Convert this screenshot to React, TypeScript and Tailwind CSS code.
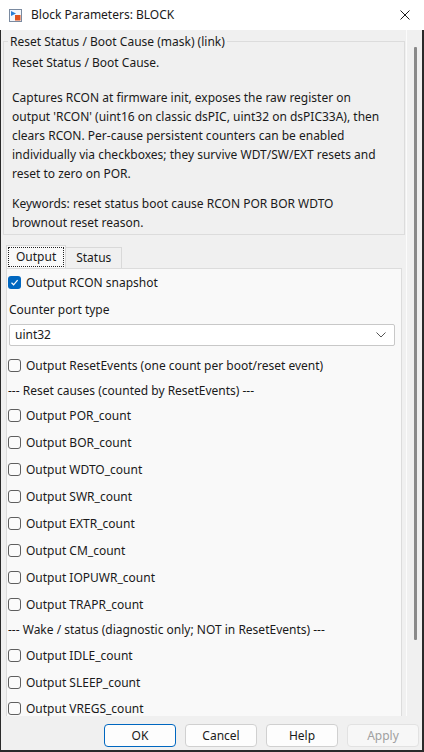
import React from "react";

const font = { fontFamily: '"Noto Sans", "Open Sans", Arial, sans-serif' };

function Box({ checked = false }: { checked?: boolean }) {
  if (checked) {
    return (
      <span className="w-[13px] h-[13px] rounded-[3px] bg-[#0067c0] flex items-center justify-center shrink-0">
        <svg width="9" height="9" viewBox="0 0 9 9">
          <path d="M1.5 4.8 L3.6 6.8 L7.6 2.2" fill="none" stroke="white" strokeWidth="1.2" />
        </svg>
      </span>
    );
  }
  return <span className="w-[13px] h-[13px] rounded-[3px] border border-[#5f5f5f] bg-[#fbfbfb] shrink-0" />;
}

function Check({ label, checked = false }: { label: string; checked?: boolean }) {
  return (
    <div className="h-[27px] flex items-center gap-[5px]">
      <Box checked={checked} />
      <span>{label}</span>
    </div>
  );
}

function Btn({ children, primary = false, disabled = false }: { children: React.ReactNode; primary?: boolean; disabled?: boolean }) {
  return (
    <div
      className={
        "w-[72px] h-[23px] rounded-[4px] flex items-center justify-center " +
        (primary
          ? "border-[1.5px] border-[#0067c0] text-[#1a1a1a] bg-[#fdfdfd]"
          : disabled
          ? "border border-[#e2e2e2] text-[#a0a0a0] bg-[#f7f7f7]"
          : "border border-[#d0d0d0] text-[#1a1a1a] bg-[#fdfdfd]")
      }
    >
      {children}
    </div>
  );
}

export default function App() {
  return (
    <div className="w-[424px] h-[752px] bg-white flex flex-col text-[12px] text-[#1a1a1a] overflow-hidden" style={font}>
      {/* title bar */}
      <div className="h-[30px] flex items-center shrink-0 bg-white">
        <div className="ml-[9px] w-[13px] h-[13px]">
          <svg width="13" height="13" viewBox="0 0 13 13">
            <rect x="0.5" y="0.5" width="12" height="12" fill="#f4f7fb" stroke="#7a8aa0" />
            <path d="M2 2 L7 4.5 L2 7 Z" fill="#2a7fd4" />
            <rect x="6" y="6" width="5.5" height="5.5" fill="#e0521c" />
          </svg>
        </div>
        <span className="ml-[9px] text-[12px]">Block Parameters: BLOCK</span>
        <div className="ml-auto mr-[14px]">
          <svg width="10" height="10" viewBox="0 0 10 10">
            <path d="M0.5 0.5 L9.5 9.5 M9.5 0.5 L0.5 9.5" stroke="#1a1a1a" strokeWidth="1" />
          </svg>
        </div>
      </div>

      {/* body */}
      <div className="flex-1 flex flex-col bg-[#f0f0f0] border-l border-r-2 border-b-2 border-[#2a2a2a] min-h-0">
        <div className="flex flex-1 min-h-0">
          {/* content */}
          <div className="flex-1 min-w-0 overflow-hidden pl-[2px] pr-[1px]">
            {/* groupbox */}
            <div className="relative mt-[11px] border border-[#dcdcdc] h-[194px] px-[8px] pt-[11px] leading-[19px]">
              <div className="absolute -top-[10px] left-[4px] px-[2px] bg-[#f0f0f0] leading-[19px]">
                Reset Status / Boot Cause (mask) (link)
              </div>
              <p>Reset Status / Boot Cause.</p>
              <p className="mt-[16px]">
                Captures RCON at firmware init, exposes the raw register on
                <br />
                output 'RCON' (uint16 on classic dsPIC, uint32 on dsPIC33A), then
                <br />
                clears RCON. Per-cause persistent counters can be enabled
                <br />
                individually via checkboxes; they survive WDT/SW/EXT resets and
                <br />
                reset to zero on POR.
              </p>
              <p className="mt-[11px]">
                Keywords: reset status boot cause RCON POR BOR WDTO
                <br />
                brownout reset reason.
              </p>
            </div>

            {/* tabs */}
            <div className="mt-[10px] flex items-end pl-[3px]">
              <div className="h-[23px] px-[1px] border border-b-0 border-[#d9d9d9] bg-[#f9f9f9] flex items-center">
                <div className="h-[20px] px-[7px] border border-dotted border-[#222] flex items-center">Output</div>
              </div>
              <div className="h-[21px] w-[56px] border border-b-0 border-l-0 border-[#d9d9d9] bg-[#f0f0f0] flex items-center justify-center">
                Status
              </div>
            </div>
            <div className="ml-[3px] mr-[3px] border border-[#dcdcdc] bg-[#f9f9f9] pl-[1px] pr-[6px] pb-[10px]">
              <Check label="Output RCON snapshot" checked />
              <div className="h-[28px] flex items-center pl-[1px]">Counter port type</div>
              <div className="ml-[1px] h-[22px] border border-[#c8c8c8] rounded-[2px] bg-white flex items-center pl-[5px] pr-[8px]">
                <span>uint32</span>
                <svg className="ml-auto" width="10" height="6" viewBox="0 0 10 6">
                  <path d="M0.5 0.5 L5 5 L9.5 0.5" fill="none" stroke="#555" strokeWidth="1" />
                </svg>
              </div>
              <div className="h-[6px]" />
              <Check label="Output ResetEvents (one count per boot/reset event)" />
              <div className="h-[23px] flex items-center">--- Reset causes (counted by ResetEvents) ---</div>
              <Check label="Output POR_count" />
              <Check label="Output BOR_count" />
              <Check label="Output WDTO_count" />
              <Check label="Output SWR_count" />
              <Check label="Output EXTR_count" />
              <Check label="Output CM_count" />
              <Check label="Output IOPUWR_count" />
              <Check label="Output TRAPR_count" />
              <div className="h-[24px] flex items-center">--- Wake / status (diagnostic only; NOT in ResetEvents) ---</div>
              <Check label="Output IDLE_count" />
              <Check label="Output SLEEP_count" />
              <div className="h-[25px] flex items-center gap-[5px]">
                <Box />
                <span>Output VREGS_count</span>
              </div>
            </div>
          </div>
          {/* scrollbar */}
          <div className="w-[16px] shrink-0 border-l border-[#fbfbfb] flex justify-center pt-[17px]">
            <div className="w-[3px] h-[593px] bg-[#8a8a8a] rounded-[1px] ml-[1px]" />
          </div>
        </div>

        {/* buttons */}
        <div className="h-[34px] shrink-0 flex items-start pt-[8px] pl-[103px] gap-[9px]">
          <Btn primary>OK</Btn>
          <Btn>Cancel</Btn>
          <Btn>Help</Btn>
          <Btn disabled>Apply</Btn>
        </div>
      </div>
    </div>
  );
}
